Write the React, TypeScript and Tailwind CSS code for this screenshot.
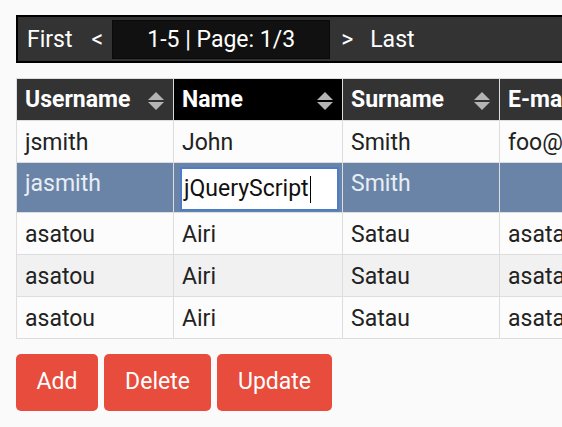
import React from "react";

type Row = {
  username: string;
  name: string;
  surname: string;
  email: string;
};

const rows: Row[] = [
  { username: "jsmith", name: "John", surname: "Smith", email: "foo@example.com" },
  { username: "jasmith", name: "jQueryScript", surname: "Smith", email: "" },
  { username: "asatou", name: "Airi", surname: "Satau", email: "asatau@gmail.com" },
  { username: "asatou", name: "Airi", surname: "Satau", email: "asatau@gmail.com" },
  { username: "asatou", name: "Airi", surname: "Satau", email: "asatau@gmail.com" },
];

const SortIcon = () => (
  <svg width="18" height="20" viewBox="0 0 18 20" className="shrink-0">
    <polygon points="1,9 9,1 17,9" fill="#b4b4b4" />
    <polygon points="1,11 9,19 17,11" fill="#b4b4b4" />
  </svg>
);

const columns = [
  { label: "Username", width: "w-[157px]", sorted: false },
  { label: "Name", width: "w-[169px]", sorted: true },
  { label: "Surname", width: "w-[157px]", sorted: false },
  { label: "E-mail", width: "w-[230px]", sorted: false },
];

export default function App() {
  return (
    <div
      className="w-[562px] h-[427px] overflow-hidden bg-[#fafafa] pt-[15px] pl-[16px] text-[23px] leading-[1.5] text-[#222]"
      style={{ fontFamily: "Roboto, 'Liberation Sans', sans-serif" }}
    >
      {/* pager */}
      <div className="w-[620px] h-[48px] border-2 border-black bg-[#333] flex items-center text-white">
        <span className="pl-[9px] pt-[3px]">First</span>
        <span className="ml-[19px] pt-[3px]">&lt;</span>
        <div className="ml-[9px] w-[218px] h-[39px] pt-[3px] bg-[#111] border border-[#0a0a0a] flex items-center justify-center">
          1-5 | Page: 1/3
        </div>
        <span className="ml-[11px] pt-[3px]">&gt;</span>
        <span className="ml-[17px] pt-[3px]">Last</span>
      </div>

      {/* grid */}
      <table className="mt-[15px] border-collapse table-fixed w-[713px]">
        <thead>
          <tr className="h-[42px]">
            {columns.map((c) => (
              <th
                key={c.label}
                className={`${c.width} ${c.sorted ? "bg-black" : "bg-[#333]"} border border-[#ddd] text-left text-white font-bold px-[8px] pt-[2px] pb-0 whitespace-nowrap`}
              >
                <div className="flex items-center justify-between">
                  <span>{c.label}</span>
                  <SortIcon />
                </div>
              </th>
            ))}
          </tr>
        </thead>
        <tbody>
          {rows.map((r, i) => {
            if (i === 1) {
              return (
                <tr key={i} className="h-[50px] bg-[#6a84a8] text-[#e8edf4]">
                  <td className="border border-[#ddd] align-top pt-[4px] px-[8px]">{r.username}</td>
                  <td className="border border-[#ddd] pl-[6px] pr-[2px] py-0">
                    <div className="h-[44px] w-[159px] mt-[2px] pt-[2px] border-2 border-[#4d7cc9] bg-white text-[#111] flex items-center pl-[2px]">
                      {r.name}
                      <span className="inline-block w-px h-[27px] bg-black ml-px" />
                    </div>
                  </td>
                  <td className="border border-[#ddd] align-top pt-[4px] px-[8px]">{r.surname}</td>
                  <td className="border border-[#ddd] px-[8px]">{r.email}</td>
                </tr>
              );
            }
            return (
              <tr key={i} className={`h-[42px] ${i === 3 ? "bg-[#f1f1f1]" : "bg-[#fcfcfc]"}`}>
                <td className="border border-[#ddd] px-[8px] pt-[3px] pb-0">{r.username}</td>
                <td className="border border-[#ddd] px-[8px] pt-[3px] pb-0">{r.name}</td>
                <td className="border border-[#ddd] px-[8px] pt-[3px] pb-0">{r.surname}</td>
                <td className="border border-[#ddd] px-[8px] pt-[3px] pb-0 whitespace-nowrap overflow-hidden">{r.email}</td>
              </tr>
            );
          })}
        </tbody>
      </table>

      {/* actions */}
      <div className="mt-[15px] flex gap-[6px] text-white">
        <button className="h-[57px] w-[82px] rounded-[5px] bg-[#e74c3c]">Add</button>
        <button className="h-[57px] w-[107px] rounded-[5px] bg-[#e74c3c]">Delete</button>
        <button className="h-[57px] w-[115px] rounded-[5px] bg-[#e74c3c]">Update</button>
      </div>
    </div>
  );
}
